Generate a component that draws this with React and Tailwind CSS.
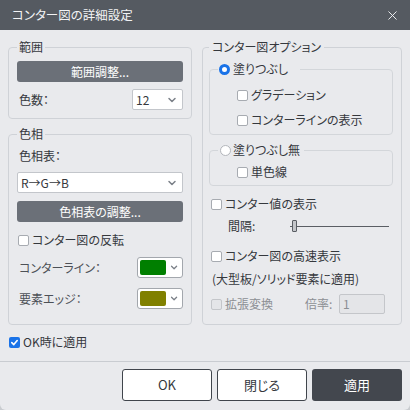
import { ChevronDown, X } from 'lucide-react'

function Check({ checked, disabled }) {
  if (checked) {
    return (
      <span className="w-[11px] h-[11px] rounded-[2px] bg-[#1a73e8] flex items-center justify-center shrink-0">
        <svg width="9" height="9" viewBox="0 0 10 10">
          <path d="M2 5.2 L4.2 7.3 L8 2.8" fill="none" stroke="white" strokeWidth="1.8" strokeLinecap="round" strokeLinejoin="round" />
        </svg>
      </span>
    )
  }
  return (
    <span
      className={`w-[11px] h-[11px] rounded-[2px] border shrink-0 ${disabled ? 'bg-[#e4e5e8] border-[#c4c6ca]' : 'bg-white border-[#a7abb1]'}`}
    />
  )
}

function Radio({ checked }) {
  return checked ? (
    <span className="w-[11px] h-[11px] rounded-full border-[3px] border-[#1a73e8] bg-white shrink-0" />
  ) : (
    <span className="w-[11px] h-[11px] rounded-full border border-[#b3b6bb] bg-white shrink-0" />
  )
}

function CheckRow({ label, checked, disabled, className = '' }) {
  return (
    <div className={`flex items-center gap-[3px] h-[16px] ${className}`}>
      <Check checked={checked} disabled={disabled} />
      <span className={disabled ? 'text-[#8c8f94]' : ''}>{label}</span>
    </div>
  )
}

function Select({ value, className = '' }) {
  return (
    <div className={`h-[21px] bg-white border border-[#c3c6cb] rounded-[2px] flex items-center justify-between pl-[3px] pr-[4px] ${className}`}>
      <span>{value}</span>
      <ChevronDown size={12} strokeWidth={3} color="#7b8088" />
    </div>
  )
}

function ColorPick({ color }) {
  return (
    <div className="w-[46px] h-[21px] bg-white border border-[#a3a7ad] rounded-[3px] flex items-center pl-[2px] pr-[3px] gap-[3px]">
      <span className="w-[28px] h-[15px] rounded-[2px]" style={{ backgroundColor: color }} />
      <ChevronDown size={11} strokeWidth={3} color="#7b8088" />
    </div>
  )
}

function DarkButton({ children, className = '' }) {
  return (
    <div className={`h-[21px] rounded-[3px] bg-[#6b7078] text-white flex items-center justify-center ${className}`}>
      {children}
    </div>
  )
}

export default function App() {
  return (
    <div className="w-[410px] h-[410px] bg-[#c9ccd0]">
      <div className="w-[410px] h-[410px] bg-[#e9eaed] rounded-b-[6px] overflow-hidden flex flex-col text-[12px] leading-[16px] text-[#35383d] font-['Noto_Sans_CJK_JP','Noto_Sans',sans-serif] [font-feature-settings:'palt']">
        {/* title bar */}
        <div className="h-[30px] bg-[#555a61] flex items-center justify-between pl-[12px] pr-[10px] text-[#f2f3f5] text-[12.5px]">
          <span>コンター図の詳細設定</span>
          <X size={15} strokeWidth={1.5} color="#f2f3f5" />
        </div>

        <div className="flex gap-[10px] px-[8px] pt-[9px]">
          {/* left column */}
          <div className="w-[184px] flex flex-col">
            <fieldset className="border border-[#cfd2d7] rounded-[4px] px-[8px] pb-[8px]">
              <legend className="px-[2px]">範囲</legend>
              <DarkButton className="mt-[6px]">範囲調整...</DarkButton>
              <div className="flex items-center justify-between mt-[7px]">
                <span className="pl-[2px]">色数：</span>
                <Select value="12" className="w-[51px]" />
              </div>
            </fieldset>

            <fieldset className="border border-[#cfd2d7] rounded-[4px] px-[8px] pb-[13px] mt-[7px] flex-1">
              <legend className="px-[2px]">色相</legend>
              <div className="mt-[6px] pl-[2px]">色相表：</div>
              <Select value="R→G→B" className="mt-[8px]" />
              <DarkButton className="mt-[8px]">色相表の調整...</DarkButton>
              <CheckRow label="コンター図の反転" className="mt-[10px] pl-[1px]" />
              <div className="flex items-center justify-between mt-[9px]">
                <span className="pl-[2px] text-[#4d5157]">コンターライン：</span>
                <ColorPick color="#007f00" />
              </div>
              <div className="flex items-center justify-between mt-[10px]">
                <span className="pl-[2px] text-[#4d5157]">要素エッジ：</span>
                <ColorPick color="#808000" />
              </div>
            </fieldset>
          </div>

          {/* right column */}
          <fieldset className="w-[200px] border border-[#cfd2d7] rounded-[4px] pl-[6px] pr-[8px] pb-[10px]">
            <legend className="px-[3px]">コンター図オプション</legend>

            <fieldset className="border border-[#d3d6da] rounded-[4px] pl-[8px] pb-[6px] mt-[6px]">
              <legend className="flex items-center gap-[3px] pl-[1px] pr-[12px]">
                <Radio checked />
                <span>塗りつぶし</span>
              </legend>
              <CheckRow label="グラデーション" className="mt-[10px] ml-[19px]" />
              <CheckRow label="コンターラインの表示" className="mt-[9px] ml-[19px]" />
            </fieldset>

            <fieldset className="border border-[#d3d6da] rounded-[4px] pl-[8px] pb-[5px] mt-[7px]">
              <legend className="flex items-center gap-[2px] pl-[2px] pr-[4px]">
                <Radio />
                <span>塗りつぶし無</span>
              </legend>
              <CheckRow label="単色線" className="mt-[6px] ml-[19px]" />
            </fieldset>

            <CheckRow label="コンター値の表示" className="mt-[10px] ml-[2px]" />
            <div className="flex items-center h-[16px] mt-[6px] ml-[19px]">
              <span className="w-[62px]">間隔:</span>
              <div className="relative flex-1 h-[14px] flex items-center mr-[4px]">
                <div className="w-full h-[1px] bg-[#5a5e64]" />
                <div className="absolute left-[2px] top-[1px] w-[5px] h-[12px] bg-[#c4c6ca] border border-[#5a5e64] rounded-[1px]" />
              </div>
            </div>

            <CheckRow label="コンター図の高速表示" className="mt-[14px] ml-[2px]" />
            <div className="mt-[7px] ml-[3px]">(大型板/ソリッド要素に適用)</div>
            <div className="flex items-center h-[20px] mt-[7px] ml-[2px]">
              <CheckRow label="拡張変換" disabled className="w-[94px]" />
              <span className="text-[#8c8f94] w-[34px]">倍率:</span>
              <div className="w-[46px] h-[20px] bg-[#e4e5e8] border border-[#c4c6ca] rounded-[2px] pl-[3px] flex items-center text-[#8c8f94]">
                1
              </div>
            </div>
          </fieldset>
        </div>

        <CheckRow label="OK時に適用" checked className="mt-[9px] ml-[9px]" />

        <div className="h-[1px] bg-[#c9ccd1] mt-[11px]" />

        <div className="flex justify-end gap-[5px] px-[8px] mt-[7px] text-[13px]">
          <div className="w-[90px] h-[32px] bg-white border border-[#40454c] rounded-[3px] flex items-center justify-center">OK</div>
          <div className="w-[90px] h-[32px] bg-white border border-[#40454c] rounded-[3px] flex items-center justify-center">閉じる</div>
          <div className="w-[90px] h-[32px] bg-[#43474e] text-white rounded-[3px] flex items-center justify-center">適用</div>
        </div>
      </div>
    </div>
  )
}
